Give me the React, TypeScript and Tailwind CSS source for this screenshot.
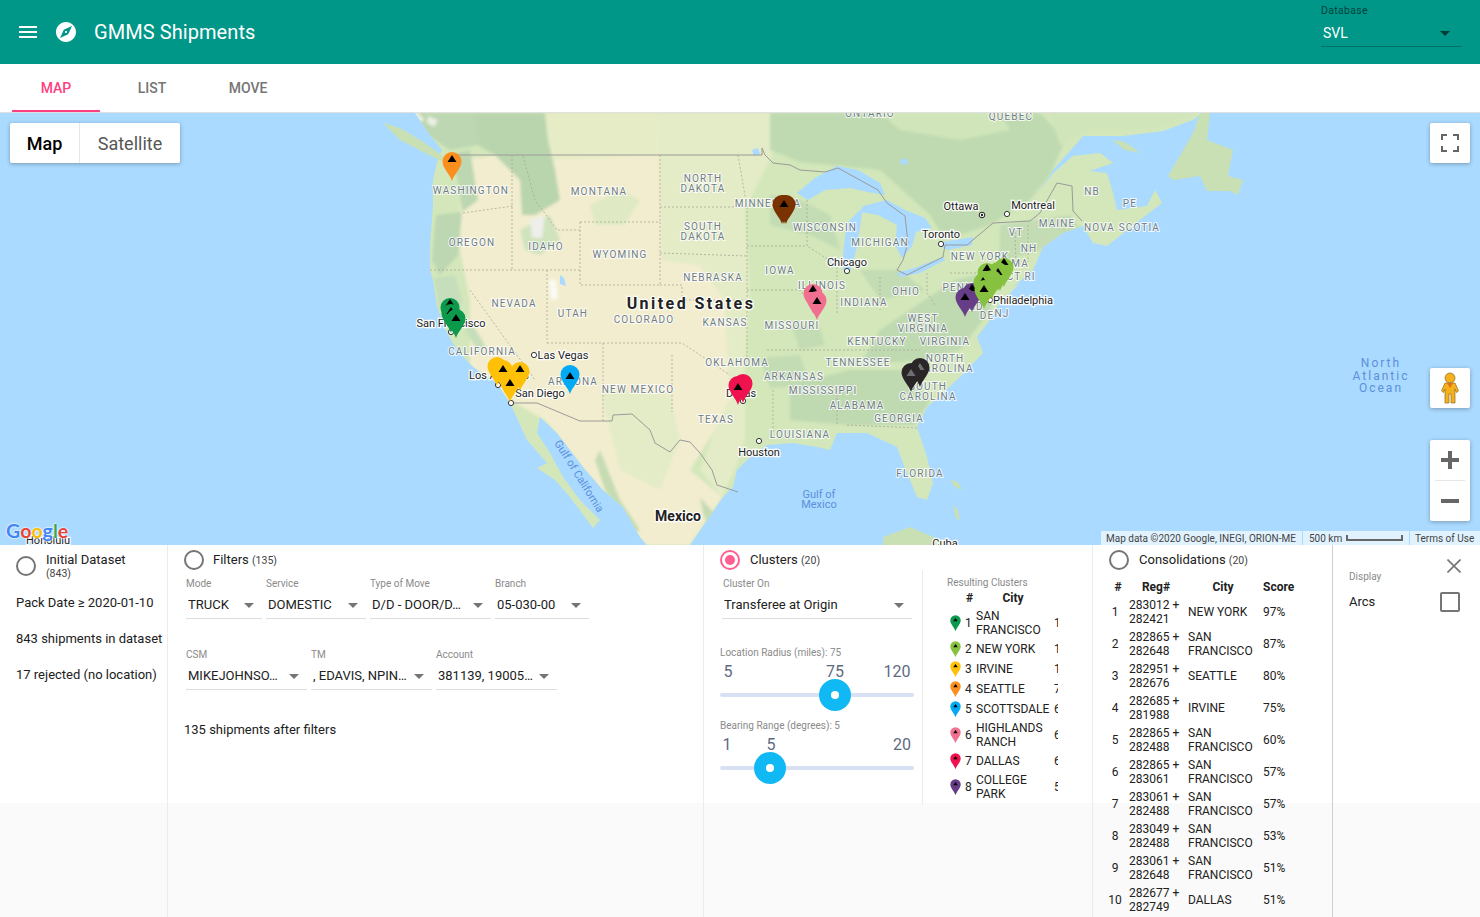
import React from "react";

const PIN = "M0 29C-1.5 23 -9.5 16 -9.5 9.5A9.5 9.5 0 1 1 9.5 9.5C9.5 16 1.5 23 0 29Z";

type Poly = [string, string];
const shapes: Poly[] = [
  // desert west
  ["#f2edcf", "458,160 500,155 545,160 660,155 662,260 700,265 725,300 730,400 715,430 690,470 722,497 690,545 645,545 600,490 545,420 510,400 470,365 470,300 460,250 460,200"],
  // plains
  ["#e3ecc6", "660,113 785,113 770,160 745,210 750,290 745,370 745,440 735,470 722,497 700,470 715,430 730,400 725,300 700,265 662,260"],
  ["#e6ecc6", "480,113 660,113 660,155 545,160 500,155"],
  // canada
  ["#bfdab0", "770,113 1040,113 1065,140 1050,175 1030,200 990,225 945,240 930,215 880,170 800,162 770,150"],
  ["#d0e5ba", "880,113 1000,113 1010,130 960,140 900,130"],
  ["#d0e5ba", "1050,113 1200,113 1150,130 1090,130 1060,145"],
  // nw forests
  ["#bcd7b1", "395,113 473,113 478,145 450,150 420,130"],
  ["#b9d5ae", "473,113 545,113 548,140 555,170 560,200 535,215 522,215 520,180 505,165 495,155 478,145"],
  ["#bcd7b1", "448,155 470,150 478,200 462,212 458,180"],
  ["#bcd7b1", "436,215 462,212 458,255 440,275 432,260"],
  ["#c6debb", "434,278 455,275 462,300 458,325 440,315"],
  ["#c6debb", "470,320 485,345 480,355 465,330"],
  ["#cfe3bd", "520,230 550,215 560,240 540,255 525,250"],
  ["#dfe9c3", "590,205 620,190 640,200 625,225 595,225"],
  // midwest + east forests
  ["#c3dcb3", "770,195 800,200 830,215 840,250 810,235 770,225"],
  ["#c3dcb3", "790,322 820,328 825,345 800,350"],
  ["#c3dcb3", "760,358 800,355 810,385 770,388"],
  ["#bfd9b1", "790,385 850,370 900,370 930,400 915,425 850,425 790,420"],
  ["#bfd9b1", "880,330 910,310 955,280 1000,270 990,310 960,350 920,360 860,365"],
  ["#c3dcb3", "1000,225 1070,215 1080,228 1040,250 1000,262"],
  ["#c3dcb3", "860,270 900,270 925,290 880,300"],
  // mexico sierra
  ["#c5dcb2", "600,450 620,500 640,530 630,535 605,490 595,460"],
  ["#c5dcb2", "700,497 720,520 713,540 703,513"],
  ["#e3ecc6", "600,390 670,395 680,440 660,490 620,470"],
  // pale patches
  ["#fbfbf4", "549,280 556,280 558,298 551,300"],
  ["#e9efe2", "408,113 418,113 425,120 415,124"],
  ["#e9efe2", "428,116 438,120 434,127 427,123"],
  ["#eeeeea", "530,220 545,215 542,238 532,238"],
];

const land =
  "415,113 430,135 442,150 437,162 433,180 433,205 430,246 430,270 433,280 437,307 447,333 457,350 473,367 497,383 510,403 527,440 547,463 537,468 555,480 570,497 593,528 600,520 580,500 563,477 550,453 537,433 540,417 557,433 583,467 603,490 623,507 640,537 647,545 690,545 723,497 733,487 737,470 747,460 767,445 793,443 817,447 830,450 837,433 867,433 897,447 903,463 917,497 927,500 933,483 927,457 917,427 927,407 943,393 960,377 983,353 977,337 990,320 997,307 1020,283 1013,287 1033,270 1043,247 1063,233 1083,226 1093,243 1107,246 1140,220 1162,203 1155,190 1147,206 1117,210 1113,193 1107,173 1090,171 1113,163 1100,153 1073,156 1053,173 1040,190 1053,170 1070,151 1083,136 1123,136 1163,131 1193,120 1202,113";

const water = [
  "797,193 815,178 837,166 858,170 880,183 885,195 868,192 850,188 825,190 808,200",
  "843,253 847,223 860,210 862,213 857,247 850,272 843,270",
  "863,206 887,200 905,210 925,218 932,228 916,232 912,246 902,258 895,245 897,225 878,215 860,212",
  "897,273 917,267 943,257 945,260 920,273 900,277",
  "937,243 973,237 972,245 947,250",
  "560,275 564,278 566,286 560,284",
  "752,150 758,148 760,154 754,156",
  "900,160 906,158 908,164 902,165",
];

const islands = [
  "383,123 400,128 425,143 444,157 441,161 425,153 400,140",
  "1112,140 1125,142 1140,153 1125,150",
  "1168,176 1193,133 1200,113 1210,113 1207,140 1233,150 1228,176 1243,180 1238,195 1230,191 1217,191 1207,191 1200,176 1173,180",
  "883,537 910,527 933,537 960,545 883,545",
  "953,505 958,510 960,520 956,518",
  "950,480 958,482 962,490 955,487",
];

const border =
  "457,155 762,155 762,148 765,155 773,163 790,165 800,170 825,172 838,168 878,190 887,203 905,216 908,243 903,260 897,270 907,275 943,257 945,245 967,245 993,223 1030,221 1040,213 1057,183 1067,185 1072,186 1073,211 1082,221";
const border2 =
  "510,403 537,403 580,421 612,421 613,415 632,414 650,430 655,443 670,452 680,440 690,442 700,453 712,470 717,485 738,492";

const stateLines = [
  "463,213 513,206", "512,155 512,270", "523,156 535,200 557,230 580,230", "430,270 580,270", "547,270 547,343",
  "580,222 660,222 660,285 580,285 580,222", "660,155 660,222", "660,207 747,207", "738,155 747,207", "660,253 747,256",
  "747,207 747,360", "747,246 807,246", "660,285 682,285 682,300 747,300", "547,343 682,343 730,375", "603,343 603,421",
  "672,355 672,412", "747,290 800,290 815,310", "767,350 827,350 920,350", "837,263 837,313", "880,277 880,310",
  "927,273 927,293 935,305", "950,273 1010,273", "773,390 773,433", "837,390 837,425", "847,425 917,428",
  "807,200 807,246 832,262", "1015,232 1016,262", "1028,225 1028,262", "470,290 535,380",
];

const labels: [string, number, number][] = [
  ["WASHINGTON", 471, 194], ["MONTANA", 599, 195], ["NORTH", 703, 182], ["DAKOTA", 703, 192], ["MINNESOTA", 768, 207],
  ["WISCONSIN", 825, 231], ["MICHIGAN", 880, 246], ["OREGON", 472, 246], ["IDAHO", 546, 250], ["WYOMING", 620, 258],
  ["SOUTH", 703, 230], ["DAKOTA", 703, 240], ["NEBRASKA", 713, 281], ["IOWA", 780, 274], ["ILLINOIS", 822, 289],
  ["OHIO", 906, 295], ["INDIANA", 864, 306], ["NEVADA", 514, 307], ["UTAH", 573, 317], ["COLORADO", 644, 323],
  ["KANSAS", 725, 326], ["MISSOURI", 792, 329], ["KENTUCKY", 877, 345], ["WEST", 923, 322], ["VIRGINIA", 923, 332],
  ["VIRGINIA", 945, 345], ["CALIFORNIA", 482, 355], ["OKLAHOMA", 737, 366], ["TENNESSEE", 858, 366], ["NORTH", 945, 362],
  ["CAROLINA", 945, 372], ["ARKANSAS", 794, 380], ["ARIZONA", 573, 385], ["NEW MEXICO", 638, 393], ["MISSISSIPPI", 823, 394],
  ["SOUTH", 928, 390], ["CAROLINA", 928, 400], ["ALABAMA", 857, 409], ["GEORGIA", 899, 422], ["TEXAS", 716, 423],
  ["LOUISIANA", 800, 438], ["FLORIDA", 920, 477], ["NEW YORK", 980, 260], ["PENN", 958, 291], ["MA", 1020, 267],
  ["CT", 1014, 280], ["RI", 1030, 280], ["VT", 1016, 236], ["NH", 1029, 252], ["MAINE", 1057, 227], ["NB", 1092, 195],
  ["PE", 1130, 207], ["NOVA SCOTIA", 1122, 231], ["QUEBEC", 1011, 120], ["ONTARIO", 870, 117], ["MD", 975, 310],
  ["DE", 987, 319], ["NJ", 1002, 317],
];

const cities: [string, number, number][] = [
  ["Ottawa", 961, 210], ["Montreal", 1033, 209], ["Toronto", 941, 238], ["Chicago", 847, 266], ["San Francisco", 451, 327],
  ["Las Vegas", 563, 359], ["Los Angeles", 499, 379], ["San Diego", 540, 397], ["Dallas", 741, 397], ["Houston", 759, 456],
  ["Philadelphia", 1023, 304], ["Cuba", 945, 547], ["Honolulu", 48, 544],
];

const dots: [number, number][] = [
  [1007, 214], [941, 244], [847, 271], [451, 332], [534, 355], [498, 385], [511, 403], [743, 401], [759, 441], [990, 300],
];

const markers: [number, number, string, number?, string?][] = [
  [452, 152, "#fb8f1d", 7],
  [782, 195, "#7a3200", 0], [786, 195, "#7a3200", 0], [784, 195, "#7a3200", 9],
  [450, 298, "#0b9a4b", 5], [451, 304, "#0b9a4b", 7], [456, 309, "#0b9a4b", 9],
  [497, 357, "#ffc107", 0], [503, 360, "#ffc107", 9], [520, 362, "#ffc107", 7], [510, 373, "#ffc107", 10],
  [570, 365, "#03a9f4", 11],
  [813, 284, "#f2708f", 5], [817, 291, "#f2708f", 10],
  [743, 374, "#f0124f", 0], [738, 376, "#f0124f", 11],
  [920, 358, "#2a2627", 9, "#6f6f6f"], [911, 363, "#2a2627", 10, "#6f6f6f"],
  [972, 283, "#663d86", 5], [965, 288, "#663d86", 9],
  [1000, 262, "#86c23f", 0], [993, 266, "#86c23f", 0],
  [1004, 258, "#86c23f", 4], [998, 262, "#86c23f", 10], [987, 263, "#86c23f", 5], [992, 270, "#86c23f", 0],
  [983, 273, "#86c23f", 8], [984, 280, "#86c23f", 9],
];

function Pts({ d, fill }: { d: string; fill: string }) {
  return <polygon points={d} fill={fill} />;
}

function MapDrawing() {
  return (
    <svg viewBox="0 113 1480 432" className="absolute inset-0 h-full w-full bg-[#aadaff]">
      <defs>
        <filter id="soft" x="-5%" y="-5%" width="110%" height="110%">
          <feGaussianBlur stdDeviation="1.4" />
        </filter>
        <clipPath id="landclip">
          <polygon points={land} />
        </clipPath>
      </defs>
      <polygon points={land} fill="#d3e7ba" />
      {islands.map((d, i) => (
        <Pts key={i} d={d} fill="#c8e0b4" />
      ))}
      <g clipPath="url(#landclip)">
        <g filter="url(#soft)">
          {shapes.map(([c, d], i) => (
            <Pts key={i} d={d} fill={c} />
          ))}
        </g>
      </g>
      {water.map((d, i) => (
        <Pts key={i} d={d} fill="#aadaff" />
      ))}
      {stateLines.map((d, i) => (
        <polyline key={i} points={d} fill="none" stroke="#a8a898" strokeWidth="0.8" strokeDasharray="2 2" />
      ))}
      <polyline points={border} fill="none" stroke="#9a9a9a" strokeWidth="1" />
      <polyline points={border2} fill="none" stroke="#9a9a9a" strokeWidth="1" />

      {labels.map(([t, x, y], i) => (
        <text key={i} x={x} y={y} textAnchor="middle" className="fill-[#6f7c85] stroke-white/80 stroke-[2px] text-[10px] tracking-[1.15px] [paint-order:stroke]">
          {t}
        </text>
      ))}
      {dots.map(([x, y], i) => (
        <circle key={i} cx={x} cy={y} r="2.6" fill="#fff" stroke="#333" strokeWidth="1" />
      ))}
      <circle cx="982" cy="215" r="2.8" fill="#fff" stroke="#222" strokeWidth="1" />
      <circle cx="982" cy="215" r="1.2" fill="#222" />
      {cities.map(([t, x, y], i) => (
        <text key={i} x={x} y={y} textAnchor="middle" className="fill-[#1d1d1d] stroke-white/90 stroke-[2.5px] text-[11px] [paint-order:stroke]">
          {t}
        </text>
      ))}
      <text x="691" y="309" textAnchor="middle" className="fill-[#222] stroke-white/90 stroke-[2.5px] text-[16px] font-bold tracking-[2.45px] [paint-order:stroke]">
        United States
      </text>
      <text x="678" y="521" textAnchor="middle" className="fill-[#222] stroke-white/90 stroke-[2.5px] text-[14px] font-bold [paint-order:stroke]">
        Mexico
      </text>
      <text x="819" y="498" textAnchor="middle" className="fill-[#5c8fdb] text-[11px]">Gulf of</text>
      <text x="819" y="508" textAnchor="middle" className="fill-[#5c8fdb] text-[11px]">Mexico</text>
      <text x="0" y="0" textAnchor="middle" transform="translate(576,478) rotate(58)" className="fill-[#5c8fdb] text-[11px]">
        Gulf of California
      </text>
      <text x="1381" y="367" textAnchor="middle" className="fill-[#5c8fdb] text-[12px] tracking-[2px]">North</text>
      <text x="1381" y="380" textAnchor="middle" className="fill-[#5c8fdb] text-[12px] tracking-[2px]">Atlantic</text>
      <text x="1381" y="392" textAnchor="middle" className="fill-[#5c8fdb] text-[12px] tracking-[2px]">Ocean</text>

      {markers.map(([x, y, c, t, tc], i) => (
        <g key={i} transform={`translate(${x},${y})`}>
          <path d={PIN} fill={c} />
          {t ? <polygon points={`-4.5,${t + 3} 4.5,${t + 3} 0,${t - 4}`} fill={tc || "#000"} /> : null}
        </g>
      ))}
    </svg>
  );
}

function GoogleLogo() {
  const L = ["#4285f4", "#ea4335", "#fbbc05", "#4285f4", "#34a853", "#ea4335"];
  return (
    <div className="absolute bottom-[2px] left-[6px] flex text-[19.5px] leading-[24px] font-[Lato,sans-serif] font-bold [text-shadow:0_0_2px_#fff,0_0_2px_#fff]">
      {"Google".split("").map((c, i) => (
        <span key={i} style={{ color: L[i] }}>
          {c}
        </span>
      ))}
    </div>
  );
}

function Caret({ cls = "border-t-[#757575]" }: { cls?: string }) {
  return <span className={`h-0 w-0 border-x-[5px] border-t-[5px] border-x-transparent ${cls}`} />;
}

function Field({ label, value, w }: { label: string; value: string; w: string }) {
  return (
    <div className={`${w} shrink-0`}>
      <div className="text-[10px] leading-[12px] text-[#8a8a8a]">{label}</div>
      <div className="mt-[6px] flex h-[23px] items-center justify-between border-b border-[#dcdcdc] pr-2 pb-[4px] pl-[2px]">
        <span className="whitespace-nowrap text-[13px] text-[#212121]">{value}</span>
        <Caret />
      </div>
    </div>
  );
}

function Radio({ on }: { on?: boolean }) {
  return on ? (
    <span className="flex h-5 w-5 shrink-0 items-center justify-center rounded-full border-2 border-[#ff5f90]">
      <span className="h-[10px] w-[10px] rounded-full bg-[#ff5f90]" />
    </span>
  ) : (
    <span className="block h-5 w-5 shrink-0 rounded-full border-2 border-[#757575]" />
  );
}

function Small({ children }: { children: React.ReactNode }) {
  return <span className="text-[10.5px] text-[#444]">{children}</span>;
}

function Slider({ label, ticks, pos, track }: { label: string; ticks: [string, string][]; pos: string; track: string }) {
  return (
    <div>
      <div className="text-[10px] leading-[12px] text-[#8a8a8a]">{label}</div>
      <div className="relative mt-[3px] h-[20px] text-[16px] leading-[20px] text-[#5d6b82]">
        {ticks.map(([t, c]) => (
          <span key={t + c} className={`absolute top-0 -translate-x-1/2 ${c}`}>
            {t}
          </span>
        ))}
      </div>
      <div className="relative mt-[11px] h-[4px] w-[194px] rounded-full bg-[#d8e1f3]">
        <span className={`absolute top-[-14px] flex h-8 w-8 items-center justify-center rounded-full bg-[#10b9f4] ${pos}`}>
          <span className="h-2 w-2 rounded-full bg-white" />
        </span>
      </div>
      <div className={track} />
    </div>
  );
}

const clusters: [string, string, string, string][] = [
  ["#0b9a4b", "1", "SAN FRANCISCO", "1"],
  ["#86c23f", "2", "NEW YORK", "1"],
  ["#ffc107", "3", "IRVINE", "1"],
  ["#fb8f1d", "4", "SEATTLE", "7"],
  ["#03a9f4", "5", "SCOTTSDALE", "6"],
  ["#f2708f", "6", "HIGHLANDS RANCH", "6"],
  ["#f0124f", "7", "DALLAS", "6"],
  ["#663d86", "8", "COLLEGE PARK", "5"],
];

const consolidations: [string, string, string, string, string][] = [
  ["1", "283012 +", "282421", "NEW YORK", "97%"],
  ["2", "282865 +", "282648", "SAN FRANCISCO", "87%"],
  ["3", "282951 +", "282676", "SEATTLE", "80%"],
  ["4", "282685 +", "281988", "IRVINE", "75%"],
  ["5", "282865 +", "282488", "SAN FRANCISCO", "60%"],
  ["6", "282865 +", "283061", "SAN FRANCISCO", "57%"],
  ["7", "283061 +", "282488", "SAN FRANCISCO", "57%"],
  ["8", "283049 +", "282488", "SAN FRANCISCO", "53%"],
  ["9", "283061 +", "282648", "SAN FRANCISCO", "51%"],
  ["10", "282677 +", "282749", "DALLAS", "51%"],
];

export default function App() {
  return (
    <div className="flex h-[917px] w-[1480px] flex-col overflow-hidden bg-[#fafafa] font-[Roboto,sans-serif] text-[13px] text-[#212121]">
      {/* App bar */}
      <header className="flex h-16 shrink-0 items-center bg-[#009688] text-white">
        <svg viewBox="0 0 24 24" className="ml-4 h-6 w-6 fill-white">
          <path d="M3 18h18v-2H3v2zm0-5h18v-2H3v2zm0-7v2h18V6H3z" />
        </svg>
        <svg viewBox="0 0 24 24" className="ml-[14px] h-6 w-6 fill-white">
          <path d="M12 10.9c-.61 0-1.1.49-1.1 1.1s.49 1.1 1.1 1.1c.61 0 1.1-.49 1.1-1.1s-.49-1.1-1.1-1.1zM12 2C6.48 2 2 6.48 2 12s4.48 10 10 10 10-4.48 10-10S17.52 2 12 2zm2.19 12.19L6 18l3.81-8.19L18 6l-3.81 8.19z" />
        </svg>
        <h1 className="ml-4 text-[20px] font-normal tracking-[0.07px]">GMMS Shipments</h1>
        <div className="mr-[18px] ml-auto flex h-16 w-[141px] flex-col">
          <div className="mt-[5px] text-[10.5px] leading-[12px] tracking-[0.3px] text-[#00000099]">Database</div>
          <div className="mt-[7px] flex h-[23px] items-center justify-between border-b border-[#00000040] pr-3 pb-[3px] pl-[2px]">
            <span className="text-[14px]">SVL</span>
            <Caret cls="border-t-[#00000099]" />
          </div>
        </div>
      </header>

      {/* Tabs */}
      <nav className="flex h-[49px] shrink-0 gap-2 border-b border-[#e0e0e0] bg-white pl-3 text-[14px] font-medium">
        <div className="flex h-12 w-[88px] items-center justify-center border-b-2 border-[#ff4081] pt-[2px] text-[#ff4081]">MAP</div>
        <div className="flex h-12 w-[88px] items-center justify-center text-[#757575]">LIST</div>
        <div className="flex h-12 w-[88px] items-center justify-center text-[#757575]">MOVE</div>
      </nav>

      {/* Map */}
      <section className="relative h-[432px] shrink-0 overflow-hidden">
        <MapDrawing />
        <div className="absolute top-[10px] left-[10px] flex h-10 w-[170px] rounded-[2px] bg-white text-[18px] shadow-[0_1px_4px_rgba(0,0,0,0.3)]">
          <div className="flex w-[70px] items-center justify-center border-r border-[#e6e6e6] font-medium text-black">Map</div>
          <div className="flex flex-1 items-center justify-center text-[#565656]">Satellite</div>
        </div>
        <div className="absolute top-[10px] right-[10px] flex h-10 w-10 items-center justify-center rounded-[2px] bg-white shadow-[0_1px_4px_rgba(0,0,0,0.3)]">
          <svg viewBox="0 0 18 18" className="h-[18px] w-[18px] fill-[#666]">
            <path d="M0 0h6v2H2v4H0zM12 0h6v6h-2V2h-4zM0 12h2v4h4v2H0zM16 12h2v6h-6v-2h4z" />
          </svg>
        </div>
        <div className="absolute top-[255px] right-[10px] flex h-10 w-10 items-center justify-center rounded-[2px] bg-white shadow-[0_1px_4px_rgba(0,0,0,0.3)]">
          <svg viewBox="0 0 20 32" className="h-8 w-5">
            <circle cx="10" cy="6" r="5" fill="#f5b01c" stroke="#8d6d1f" strokeWidth="0.7" />
            <path d="M5 11h10l3.5 8-2 1.5L15 17v14h-4v-9H9v9H5V17l-1.500 3.500-2-1.500z" fill="#f5b01c" stroke="#8d6d1f" strokeWidth="0.7" />
            <path d="M7 11h6l-3 5z" fill="#e2711d" />
          </svg>
        </div>
        <div className="absolute top-[327px] right-[10px] flex h-[81px] w-10 flex-col items-center rounded-[2px] bg-white shadow-[0_1px_4px_rgba(0,0,0,0.3)]">
          <svg viewBox="0 0 18 18" className="mt-[11px] h-[18px] w-[18px] fill-[#666]">
            <path d="M7 0h4v7h7v4h-7v7H7v-7H0V7h7z" />
          </svg>
          <div className="mt-[11px] h-px w-[30px] bg-[#e6e6e6]" />
          <svg viewBox="0 0 18 18" className="mt-[11px] h-[18px] w-[18px] fill-[#666]">
            <path d="M0 7h18v4H0z" />
          </svg>
        </div>
        <GoogleLogo />
        <div className="absolute right-0 bottom-0 flex h-[14px] items-stretch text-[10px] leading-[15px] text-[#444]">
          <div className="w-[201px] bg-white/65 pl-[5px] whitespace-nowrap">Map data ©2020 Google, INEGI, ORION-ME</div>
          <div className="ml-px flex w-[106px] items-center bg-white/65 pl-[6px]">
            <span>500 km</span>
            <span className="ml-1 h-[6px] w-[57px] border-x-2 border-b-2 border-[#666]" />
          </div>
          <div className="ml-px w-[70px] bg-white/65 pl-[5px]">Terms of Use</div>
        </div>
      </section>

      {/* Panels */}
      <section className="flex min-h-0 flex-1 overflow-hidden bg-[linear-gradient(#fff_258px,#fafafa_258px)]">
        <div className="w-[168px] shrink-0 border-r border-[#ececec] pl-4">
          <div className="mt-[8px] flex items-start">
            <span className="mt-[3px] block"><Radio /></span>
            <div className="ml-[10px] leading-[14px]">
              <div>Initial Dataset</div>
              <div className="text-[10.5px] text-[#444]">(843)</div>
            </div>
          </div>
          <div className="mt-[14px] flex flex-col gap-[21px] leading-[15px]">
            <div>Pack Date ≥ 2020-01-10</div>
            <div>843 shipments in dataset</div>
            <div>17 rejected (no location)</div>
          </div>
        </div>

        <div className="w-[536px] shrink-0 border-r border-[#ececec] pl-[16px]">
          <div className="mt-[5px] flex h-5 items-center">
            <Radio />
            <span className="ml-[9px]">Filters <Small>(135)</Small></span>
          </div>
          <div className="mt-[8px] ml-[2px] flex gap-[4px]">
            <Field label="Mode" value="TRUCK" w="w-[76px]" />
            <Field label="Service" value="DOMESTIC" w="w-[100px]" />
            <Field label="Type of Move" value="D/D - DOOR/D…" w="w-[121px]" />
            <Field label="Branch" value="05-030-00" w="w-[94px]" />
          </div>
          <div className="mt-[30px] ml-[2px] flex gap-[4px]">
            <Field label="CSM" value="MIKEJOHNSO…" w="w-[121px]" />
            <Field label="TM" value=", EDAVIS, NPIN…" w="w-[121px]" />
            <Field label="Account" value="381139, 19005…" w="w-[121px]" />
          </div>
          <div className="mt-[30px]">135 shipments after filters</div>
        </div>

        <div className="flex w-[389px] shrink-0 flex-col border-r border-[#ececec]">
          <div className="mt-[5px] ml-[16px] flex h-5 items-center">
            <Radio on />
            <span className="ml-[10px]">Clusters <Small>(20)</Small></span>
          </div>
          <div className="flex h-[235px]">
            <div className="w-[219px] shrink-0 border-r border-[#ececec] pl-4">
              <div className="mt-[8px] mr-[10px] ml-[2px]">
                <div className="pl-[1px] text-[10px] leading-[12px] text-[#8a8a8a]">Cluster On</div>
                <div className="mt-[6px] flex h-[23px] items-center justify-between border-b border-[#dcdcdc] pr-2 pb-[4px] pl-[2px]">
                  <span className="text-[13px]">Transferee at Origin</span>
                  <Caret />
                </div>
              </div>
              <div className="mt-[28px]">
                <Slider label="Location Radius (miles): 75" ticks={[["5", "left-[8px]"], ["75", "left-[115px]"], ["120", "left-[177px]"]]} pos="left-[99px]" track="h-[23px]" />
              </div>
              <div>
                <Slider label="Bearing Range (degrees): 5" ticks={[["1", "left-[7px]"], ["5", "left-[51px]"], ["20", "left-[182px]"]]} pos="left-[34px]" track="h-0" />
              </div>
            </div>
            <div className="w-[135px] shrink-0 overflow-hidden pl-[24px]">
              <div className="mt-[7px] text-[10px] leading-[12px] text-[#8a8a8a]">Resulting Clusters</div>
              <div className="flex h-[18px] w-[150px] items-center text-[12px] font-bold">
                <span className="ml-[19px] w-[6px] text-center">#</span>
                <span className="ml-[21px] w-[40px] text-center">City</span>
                <span className="ml-[27px]">Count</span>
              </div>
              <div className="w-[150px] text-[12px] leading-[14px]">
                {clusters.map(([c, n, city, k]) => (
                  <div key={n} className={`flex items-center ${city.includes(" ") && city !== "NEW YORK" ? "h-[32px]" : "h-[20px]"}`}>
                    <svg viewBox="-10 0 20 30" className="mt-[1px] ml-[3px] h-[17px] w-[11px] shrink-0">
                      <path d={PIN} fill={c} />
                      <polygon points="-4,11 4,11 0,5" fill="#000" />
                    </svg>
                    <span className="ml-[4px] w-[7px]">{n}</span>
                    <span className={`ml-[4px] w-[78px] ${city === "SCOTTSDALE" ? "whitespace-nowrap" : ""}`}>{city}</span>
                    <span>{k}</span>
                  </div>
                ))}
              </div>
            </div>
          </div>
        </div>

        <div className="w-[240px] shrink-0 overflow-hidden border-r border-[#cfcfcf]">
          <div className="mt-[5px] ml-[16px] flex h-5 items-center">
            <Radio />
            <span className="ml-[10px]">Consolidations <Small>(20)</Small></span>
          </div>
          <div className="mt-[8px] flex h-[18px] items-center text-[12px] font-bold">
            <span className="ml-[3px] w-[44px] text-center">#</span>
            <span className="w-[32px] text-center">Reg#</span>
            <span className="ml-[31px] w-[40px] text-center">City</span>
            <span className="ml-[20px]">Score</span>
          </div>
          <div className="text-[12px] leading-[14px]">
            {consolidations.map(([n, a, b, city, s]) => (
              <div key={n} className="flex h-8 items-center">
                <span className="w-[36px] shrink-0 pl-[8px] text-center">{n}</span>
                <span className="w-[59px] shrink-0 whitespace-nowrap">
                  {a}
                  <br />
                  {b}
                </span>
                <span className="w-[75px] shrink-0">{city}</span>
                <span>{s}</span>
              </div>
            ))}
          </div>
        </div>

        <div className="relative flex-1 pl-4">
          <svg viewBox="0 0 14 14" className="absolute top-[14px] right-[19px] h-[14px] w-[14px] stroke-[#757575] stroke-[1.6]">
            <path d="M0.500 0.500L13.500 13.500M13.500 0.500L0.500 13.500" fill="none" />
          </svg>
          <div className="mt-[26px] text-[10px] leading-[12px] text-[#8a8a8a]">Display</div>
          <div className="mt-[9px] flex items-center justify-between pr-[20px]">
            <span>Arcs</span>
            <span className="h-[20px] w-[20px] rounded-[2px] border-2 border-[#757575]" />
          </div>
        </div>
      </section>
    </div>
  );
}
